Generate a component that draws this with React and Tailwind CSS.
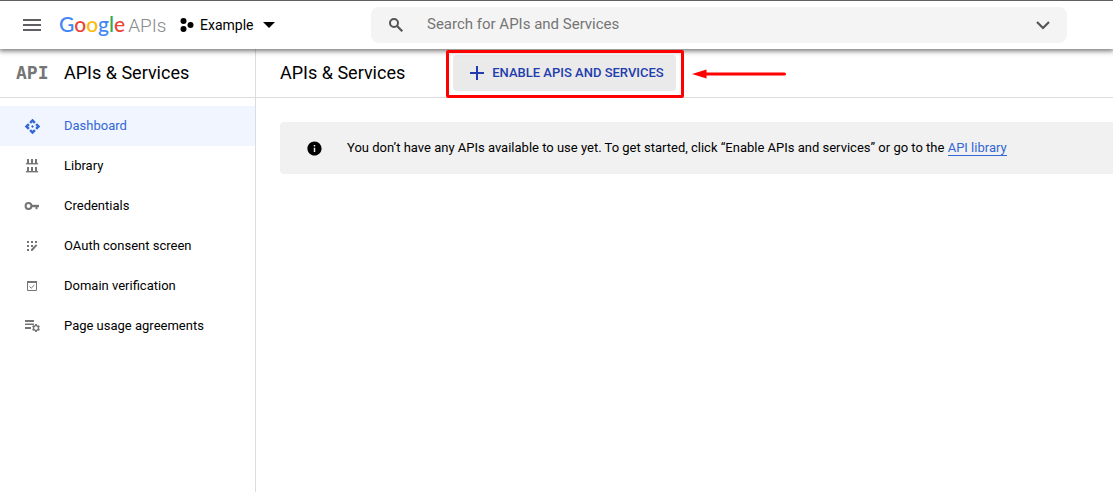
import React from 'react';
import { MdApi, MdInfo, MdMenu, MdSettings } from 'react-icons/md';

function LibraryIcon() {
  return (
    <svg width="16" height="16" viewBox="0 0 16 16" fill="currentColor" shapeRendering="crispEdges" aria-hidden="true">
      <path d="M3 1h2v5H3zM7 1h2v5H7zM11 1h2v5h-2zM2 5h12v1H2zM3 9h2v5H3zM7 9h2v5H7zM11 9h2v5h-2zM2 13h12v1H2z" />
      <path d="M2 6h12v1H2zM2 14h12v1H2z" opacity="0.4" />
    </svg>
  );
}

function KeyIcon() {
  return (
    <svg width="16" height="16" viewBox="0 0 16 16" fill="none" stroke="currentColor" strokeWidth="2" aria-hidden="true">
      <circle cx="4.500" cy="8" r="2.900" />
      <path d="M7.500 8H15" strokeWidth="2.400" />
      <path d="M12.500 8v3.200" />
    </svg>
  );
}

function ConsentIcon() {
  return (
    <svg width="16" height="16" viewBox="0 0 16 16" fill="currentColor" aria-hidden="true">
      <path d="M3 3h2v2H3zM7 3h2v2H7zM11 3h2v2h-2zM3 7h2v2H3zM7 7h2v2H7zM3 11h2v2H3z" />
      <path d="M7 13v-1.700l5-5L13.300 7.600 8.400 13z" />
    </svg>
  );
}

function DomainIcon() {
  return (
    <svg width="16" height="16" viewBox="0 0 16 16" fill="none" stroke="currentColor" aria-hidden="true">
      <path d="M3.500 3.500h9v9h-9z" />
      <path d="M3 4h10" strokeWidth="2" />
      <path d="M5.500 8.500l1.700 1.700 3.200-3.200" />
    </svg>
  );
}

function AgreementsIcon() {
  return (
    <svg width="16" height="16" viewBox="0 0 16 16" overflow="visible" aria-hidden="true">
      <path d="M1 2h9v2H1zM1 5.500h9v1.500H1zM1 9h6v2H1z" fill="currentColor" />
      <MdSettings x="7" y="5" size={10} />
      <circle cx="12" cy="10" r="1.600" fill="white" />
    </svg>
  );
}

const navItems = [
  { label: 'Dashboard', icon: <MdApi size={17} />, active: true },
  { label: 'Library', icon: <LibraryIcon /> },
  { label: 'Credentials', icon: <KeyIcon /> },
  { label: 'OAuth consent screen', icon: <ConsentIcon /> },
  { label: 'Domain verification', icon: <DomainIcon /> },
  { label: 'Page usage agreements', icon: <AgreementsIcon /> },
];

function Logo() {
  return (
    <a href="#home" aria-label="Google APIs" className="flex w-[108px] shrink-0 items-baseline whitespace-nowrap">
      <span className="font-['Lato'] text-[21px] leading-8 font-medium">
        <span className="text-[#4285f4]">G</span>
        <span className="text-[#ea4335]">o</span>
        <span className="text-[#fbbc05]">o</span>
        <span className="text-[#4285f4]">g</span>
        <span className="text-[#34a853]">l</span>
        <span className="text-[#ea4335]">e</span>
      </span>
      <span className="ml-[3px] text-[19px] leading-8 font-light text-[#8a8a8a]">APIs</span>
    </a>
  );
}

function Header() {
  return (
    <header className="relative z-10 flex h-[49px] items-center border-t border-[#5f6063] bg-white shadow-[0_1px_5px_1px_rgba(0,0,0,0.55)]">
      <button type="button" aria-label="Main menu" className="ml-5 flex size-6 shrink-0 items-center justify-center text-[#5f6063]">
        <MdMenu size={24} />
      </button>
      <div className="ml-[15px] flex w-[312px] shrink-0 items-center">
        <Logo />
        <button type="button" className="ml-[13px] flex items-center text-sm text-black">
          <svg width="14" height="14" viewBox="0 0 14 14" className="mr-[6px]" aria-hidden="true">
            <circle cx="3.500" cy="3" r="3" />
            <circle cx="10.500" cy="7" r="3" />
            <circle cx="3.500" cy="11" r="3" />
          </svg>
          Example
          <svg width="12" height="6" viewBox="0 0 12 6" className="ml-[10px]" aria-hidden="true">
            <path d="M0 0h12L6 6z" />
          </svg>
        </button>
      </div>
      <form role="search" className="mr-[46px] flex h-9 min-w-0 flex-1 items-center rounded-lg bg-[#f4f4f4] px-4 text-[#555]">
        <svg width="18" height="18" viewBox="0 0 18 18" fill="none" stroke="currentColor" strokeWidth="2" className="shrink-0" aria-hidden="true">
          <circle cx="7" cy="7" r="4" />
          <path d="M10 10l5.300 5.300" strokeWidth="2.200" />
        </svg>
        <input
          type="search"
          aria-label="Search for APIs and Services"
          placeholder="Search for APIs and Services"
          className="ml-[22px] h-8 min-w-0 flex-1 bg-transparent pb-[2px] text-[15px] text-black outline-none placeholder:text-[#757575]"
        />
        <button type="button" aria-label="Show search options" className="flex shrink-0">
          <svg width="16" height="16" viewBox="0 0 16 16" fill="none" stroke="currentColor" strokeWidth="2.200" aria-hidden="true">
            <path d="M2 5l6 6 6-6" />
          </svg>
        </button>
      </form>
    </header>
  );
}

function Sidebar() {
  return (
    <aside className="w-64 shrink-0 border-r border-[#dcdcdc]">
      <div className="flex h-[49px] items-center border-b border-[#dcdcdc] pl-4">
        <span aria-hidden="true" className="w-12 font-['DejaVu_Sans_Mono'] text-lg font-bold text-[#757575]">API</span>
        <h2 className="text-lg">APIs &amp; Services</h2>
      </div>
      <nav aria-label="APIs and services" className="pt-2">
        {navItems.map((item) => (
          <a
            key={item.label}
            href="#section"
            aria-current={item.active ? 'page' : undefined}
            className={
              item.active
                ? 'flex h-10 items-center bg-[#f0f5ff] pl-6 text-[13px] text-[#3367d6]'
                : 'flex h-10 items-center pl-6 text-[13px] text-black'
            }
          >
            <span className={item.active ? 'flex w-10 text-[#3367d6]' : 'flex w-10 text-[#757575]'}>{item.icon}</span>
            {item.label}
          </a>
        ))}
      </nav>
    </aside>
  );
}

function Main() {
  return (
    <main className="min-w-0 flex-1">
      <div className="flex h-[49px] items-center border-b border-[#dcdcdc] pl-6">
        <h1 className="text-lg whitespace-nowrap">APIs &amp; Services</h1>
        <div className="relative ml-12">
          <button type="button" className="flex h-9 items-center rounded-sm bg-[#eaeaea] pr-3 pl-4 text-[13px] font-medium whitespace-nowrap text-[#233cad]">
            <svg width="16" height="16" viewBox="0 0 16 16" fill="none" stroke="currentColor" strokeWidth="2" className="mr-[7px]" aria-hidden="true">
              <path d="M8 1v14M1 8h14" />
            </svg>
            ENABLE APIS AND SERVICES
          </button>
          <div className="pointer-events-none absolute -top-[5px] -right-2 -bottom-[7px] -left-[7px] z-20 rounded-xs border-3 border-[#ff0000]" />
          <svg width="94" height="10" viewBox="0 0 94 10" className="absolute top-[14px] left-full ml-4" aria-hidden="true">
            <path d="M0 5L14.500 .5v9z" fill="#ff0000" />
            <path d="M12 5h80.500" stroke="#ff0000" strokeWidth="3" strokeLinecap="round" />
          </svg>
        </div>
      </div>
      <div className="pt-6 pl-6">
        <div role="status" className="flex min-h-[52px] items-center rounded-l bg-[#f1f1f1] pl-[26px] text-[13px]">
          <MdInfo size={17} className="mr-6 shrink-0" />
          <p>
            You don’t have any APIs available to use yet. To get started, click “Enable APIs and services” or go to the{' '}
            <a href="#library" className="border-b border-[#3367d6] text-[#3367d6]">API library</a>
          </p>
        </div>
      </div>
    </main>
  );
}

export default function App() {
  return (
    <div className="flex min-h-screen flex-col bg-white font-['Roboto',sans-serif] text-black">
      <Header />
      <div className="flex flex-1">
        <Sidebar />
        <Main />
      </div>
    </div>
  );
}
